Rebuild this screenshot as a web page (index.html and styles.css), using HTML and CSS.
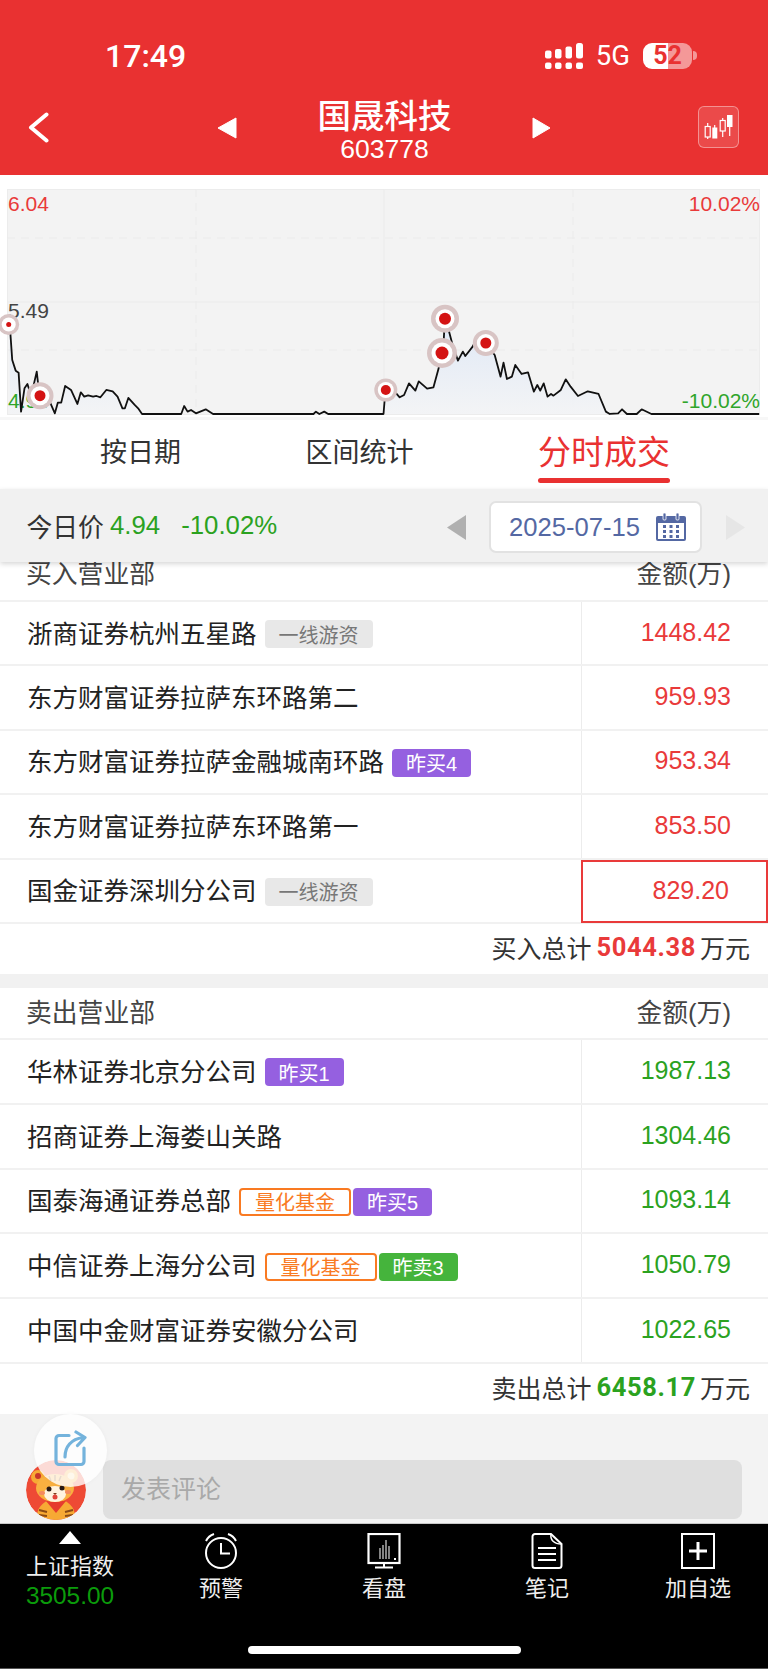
FILE: index.html
```html
<!DOCTYPE html>
<html lang="zh-CN">
<head>
<meta charset="utf-8">
<title>国晟科技 603778</title>
<link rel="stylesheet" href="styles.css">
</head>
<body>
<div class="page">
  <header class="top">
    <div class="status">
      <span class="time">17:49</span>
      <svg class="signal" viewBox="0 0 38 26" width="38" height="26">
        <g fill="#fff">
          <rect x="0" y="7.500" width="6.500" height="8" rx="2"/><rect x="10" y="6" width="6.500" height="9.500" rx="2"/><rect x="20.500" y="3.500" width="6.500" height="12" rx="2"/><rect x="31" y="0" width="7" height="15.500" rx="2.500"/>
          <rect x="0" y="19.500" width="6.500" height="6.500" rx="2"/><rect x="10" y="19.500" width="6.500" height="6.500" rx="2"/><rect x="20.500" y="19.500" width="6.500" height="6.500" rx="2"/><rect x="31" y="19.500" width="7" height="6.500" rx="2"/>
        </g>
      </svg>
      <span class="net">5G</span>
      <span class="battery">52</span>
    </div>
    <nav class="nav">
      <svg class="back" viewBox="0 0 21 31" width="21" height="31"><path d="M18.500 2.500 3 15.500l15.500 13" fill="none" stroke="#fff" stroke-width="4" stroke-linecap="round" stroke-linejoin="round"/></svg>
      <svg class="tri-l" viewBox="0 0 20 22" width="20" height="22"><path d="M19 1v20L1 11z" fill="#fff" stroke="#fff" stroke-linejoin="round"/></svg>
      <div class="stock"><div class="stock-name">国晟科技</div><div class="stock-code">603778</div></div>
      <svg class="tri-r" viewBox="0 0 19 22" width="19" height="22"><path d="M1 1v20l17-10z" fill="#fff" stroke="#fff" stroke-linejoin="round"/></svg>
      <div class="kline">
        <svg viewBox="0 0 41 42" width="41" height="42">
          <g stroke="#fff" stroke-width="1.200" fill="none">
            <path d="M9.700 17v4M9.700 31v2M16.700 19v4M24.700 12v3M24.700 25v6M31.700 21v9"/>
            <rect x="7.200" y="20.500" width="5" height="10.500"/>
            <rect x="22.200" y="14.500" width="5" height="10.500"/>
          </g>
          <rect x="14.300" y="21.500" width="5" height="11" fill="#fff"/>
          <rect x="29" y="9" width="5.500" height="12" fill="#fff"/>
        </svg>
      </div>
    </nav>
  </header>

  <section class="chart">
    <svg viewBox="0 0 768 240" width="768" height="240">
      <defs>
        <linearGradient id="area" x1="0" y1="0" x2="0" y2="1"><stop offset="0" stop-color="#dde7f6"/><stop offset="1" stop-color="#f3f4f6"/></linearGradient>
      </defs>
      <rect x="7.500" y="9.500" width="752" height="225" fill="#f3f3f3" stroke="#ececec"/>
      <g stroke="#ebebeb" stroke-width="1">
        <path d="M196 9v225M573 9v225M7 58h753M7 170h753" stroke-dasharray="8 6"/>
        <path d="M384 9v225M7 122h753"/>
      </g>
      <text class="lbl red" x="8" y="31">6.04</text>
      <text class="lbl gray" x="8" y="138">5.49</text>
      <text class="lbl red" x="760" y="31" text-anchor="end">10.02%</text>
      <g transform="scale(.4898 .3333)">
        <path fill="url(#area)" d="M20 435 25 540 32 572 38 578 43 695 50 625 56 612 62 640 68 620 75 575 80 640 90 670 100 660 112 700 118 668 125 668 133 618 145 630 158 672 165 637 172 650 180 646 190 650 197 648 205 652 217 630 230 634 240 650 250 685 255 685 262 654 275 675 282 685 290 702H783L787 630 800 625 816 652 825 645 835 610 848 632 855 604 872 626 885 622 895 568 905 510 908 420 915 445 925 500 935 542 945 515 950 528 965 500 975 470 990 490 1010 525 1022 590 1028 548 1035 597 1045 590 1052 555 1065 582 1078 577 1090 635 1097 615 1103 632 1110 610 1118 650 1125 642 1130 647 1145 630 1155 598 1165 620 1180 648 1200 634 1222 642 1237 695 1245 702H20z" opacity=".9"/>
      </g>
      <text class="lbl green" x="8" y="228">4.94</text>
      <text class="lbl green" x="760" y="228" text-anchor="end">-10.02%</text>
      <g transform="scale(.4898 .3333)">
        <polyline fill="none" stroke="#111" stroke-width="1.800" vector-effect="non-scaling-stroke" stroke-linejoin="round" points="20,435 25,540 32,572 38,578 43,695 50,625 56,612 62,640 68,620 75,575 80,640 90,670 100,660 112,700 118,668 125,668 133,618 145,630 158,672 165,637 172,650 180,646 190,650 197,648 205,652 217,630 230,634 240,650 250,685 255,685 262,654 275,675 282,685 290,702 370,702 376,678 383,695 390,690 400,700 420,688 435,702 640,702 645,695 652,702 662,695 670,702 783,702 787,630 800,625 816,652 825,645 835,610 848,632 855,604 872,626 885,622 895,568 905,510 908,420 915,445 925,500 935,542 945,515 950,528 965,500 975,470 990,490 1010,525 1022,590 1028,548 1035,597 1045,590 1052,555 1065,582 1078,577 1090,635 1097,615 1103,632 1110,610 1118,650 1125,642 1130,647 1145,630 1155,598 1165,620 1180,648 1200,634 1222,642 1237,695 1245,702 1262,700 1270,688 1280,702 1300,702 1310,688 1330,702 1550,702"/>
      </g>
      <g class="dot"><circle cx="8.700" cy="144.500" r="10.500"/><circle class="w" cx="8.700" cy="144.500" r="7"/><circle class="r" cx="8.700" cy="144.500" r="2.500"/></g>
      <g class="dot"><circle cx="40" cy="215.700" r="13.500"/><circle class="w" cx="40" cy="215.700" r="9.500"/><circle class="r" cx="40" cy="215.700" r="5.500"/></g>
      <g class="dot"><circle cx="385.800" cy="210" r="11.500"/><circle class="w" cx="385.800" cy="210" r="8"/><circle class="r" cx="385.800" cy="210" r="5"/></g>
      <g class="dot"><circle cx="442" cy="173" r="15"/><circle class="w" cx="442" cy="173" r="10.500"/><circle class="r" cx="442" cy="173" r="6.500"/></g>
      <g class="dot"><circle cx="445" cy="138.700" r="14"/><circle class="w" cx="445" cy="138.700" r="9.500"/><circle class="r" cx="445" cy="138.700" r="6"/></g>
      <g class="dot"><circle cx="485.800" cy="163" r="13"/><circle class="w" cx="485.800" cy="163" r="9"/><circle class="r" cx="485.800" cy="163" r="5.500"/></g>
    </svg>
  </section>

  <div class="tabs">
    <span class="tab">按日期</span>
    <span class="tab">区间统计</span>
    <span class="tab active">分时成交</span>
  </div>

  <div class="pricebar">
    <span class="pb-label">今日价</span>
    <span class="pb-price">4.94</span>
    <span class="pb-pct">-10.02%</span>
    <svg class="pb-prev" viewBox="0 0 19 25" width="19" height="25"><path d="M19 0v25L0 12.500z" fill="#b0b0b0"/></svg>
    <div class="datebox">
      <span class="date">2025-07-15</span>
      <svg viewBox="0 0 30 28" width="30" height="28">
        <path d="M2 3h26a2 2 0 0 1 2 2v21a2 2 0 0 1-2 2H2a2 2 0 0 1-2-2V5a2 2 0 0 1 2-2z" fill="#5468a3"/>
        <rect x="2" y="10" width="26" height="16" fill="#fff"/>
        <rect x="7" y="0" width="3" height="7" rx="1" fill="#5468a3" stroke="#fff" stroke-width=".8"/>
        <rect x="20" y="0" width="3" height="7" rx="1" fill="#5468a3" stroke="#fff" stroke-width=".8"/>
        <g fill="#5468a3">
          <rect x="7" y="12" width="3" height="3"/><rect x="13.500" y="12" width="3" height="3"/><rect x="20" y="12" width="3" height="3"/>
          <rect x="7" y="17" width="3" height="3"/><rect x="13.500" y="17" width="3" height="3"/><rect x="20" y="17" width="3" height="3"/>
          <rect x="7" y="22" width="3" height="3"/><rect x="13.500" y="22" width="3" height="3"/><rect x="20" y="22" width="3" height="3"/>
        </g>
      </svg>
    </div>
    <svg class="pb-next" viewBox="0 0 19 25" width="19" height="25"><path d="M0 0v25l19-12.500z" fill="#e6e6e6"/></svg>
  </div>

  <section class="list buy">
    <div class="thead first"><span>买入营业部</span><span>金额(万)</span></div>
    <div class="row"><div class="name">浙商证券杭州五星路<span class="tag grey">一线游资</span></div><div class="amt">1448.42</div></div>
    <div class="row"><div class="name">东方财富证券拉萨东环路第二</div><div class="amt">959.93</div></div>
    <div class="row"><div class="name">东方财富证券拉萨金融城南环路<span class="tag purple">昨买4</span></div><div class="amt">953.34</div></div>
    <div class="row"><div class="name">东方财富证券拉萨东环路第一</div><div class="amt">853.50</div></div>
    <div class="row"><div class="name">国金证券深圳分公司<span class="tag grey">一线游资</span></div><div class="amt boxed">829.20</div></div>
    <div class="total">买入总计<b>5044.38</b>万元</div>
  </section>

  <section class="list sell">
    <div class="thead"><span>卖出营业部</span><span>金额(万)</span></div>
    <div class="row"><div class="name">华林证券北京分公司<span class="tag purple">昨买1</span></div><div class="amt">1987.13</div></div>
    <div class="row"><div class="name">招商证券上海娄山关路</div><div class="amt">1304.46</div></div>
    <div class="row"><div class="name">国泰海通证券总部<span class="tag orange">量化基金</span><span class="tag purple next">昨买5</span></div><div class="amt">1093.14</div></div>
    <div class="row"><div class="name">中信证券上海分公司<span class="tag orange">量化基金</span><span class="tag green next">昨卖3</span></div><div class="amt">1050.79</div></div>
    <div class="row"><div class="name">中国中金财富证券安徽分公司</div><div class="amt">1022.65</div></div>
    <div class="total">卖出总计<b>6458.17</b>万元</div>
  </section>

  <section class="comment">
    <svg class="avatar" viewBox="0 0 60 60" width="60" height="60">
      <defs><clipPath id="av"><circle cx="30" cy="30" r="30"/></clipPath></defs>
      <g clip-path="url(#av)">
        <rect width="60" height="60" fill="#ee4a35"/>
        <ellipse cx="30" cy="56" rx="19" ry="17" fill="#f7a934"/>
        <path d="M13 50l8 2M13 55l8 1M47 50l-8 2M47 55l-8 1" stroke="#8a4a15" stroke-width="2"/>
        <path d="M20 41h20l-10 12z" fill="#e63b2e"/>
        <circle cx="12" cy="17" r="7" fill="#f7a934"/><circle cx="12" cy="16" r="3" fill="#c8352a"/>
        <circle cx="45" cy="16" r="7" fill="#f7a934"/><circle cx="45" cy="16" r="3.500" fill="#fbd9a0"/>
        <ellipse cx="29" cy="28" rx="19" ry="14" fill="#f9b040"/>
        <ellipse cx="29" cy="34" rx="11" ry="8" fill="#fff3df"/>
        <path d="M29 15v6M23 16l2 5M35 16l-2 5" stroke="#8a4a15" stroke-width="1.500"/>
        <circle cx="23" cy="29" r="2.500" fill="#2a1a12"/><circle cx="36" cy="28" r="2.500" fill="#2a1a12"/>
        <ellipse cx="16" cy="33" rx="3" ry="2" fill="#f58a5e"/><ellipse cx="42" cy="32" rx="3" ry="2" fill="#f58a5e"/>
        <path d="M27 33h4l-2 2z" fill="#7a3a1a"/>
        <ellipse cx="29" cy="37" rx="2.500" ry="2.500" fill="#e2453a"/>
      </g>
    </svg>
    <div class="input">发表评论</div>
    <button class="share" type="button" aria-label="分享">
      <svg viewBox="-2 -4 38 40" width="38" height="40">
        <path d="M15 1.500H5a3 3 0 0 0-3 3v23a3 3 0 0 0 3 3h22a3 3 0 0 0 3-3V14" fill="none" stroke="#74b3dc" stroke-width="3.200" stroke-linecap="round"/>
        <path d="M11 23C11 13 17 5 29 3.500M22-2l9 5.500-7.500 8" fill="none" stroke="#74b3dc" stroke-width="3.200" stroke-linecap="round" stroke-linejoin="round"/>
      </svg>
    </button>
  </section>

  <footer class="bottom">
    <div class="bar">
      <div class="item index">
        <svg viewBox="0 0 22 13" width="22" height="13"><path d="M11 0l11 13H0z" fill="#fff"/></svg>
        <span class="idx-name">上证指数</span>
        <span class="idx-val">3505.00</span>
      </div>
      <div class="item">
        <svg viewBox="0 0 34 36" width="34" height="36" fill="none" stroke="#fff">
          <circle cx="17" cy="20" r="15" stroke-width="2"/>
          <path d="M17 10v10.500h9" stroke-width="2"/>
          <path d="M2 8C4 4 7 2 10 1M32 8c-2-4-5-6-8-7" stroke-width="2"/>
        </svg>
        <span class="lab">预警</span>
      </div>
      <div class="item">
        <svg viewBox="0 0 34 36" width="34" height="36" fill="none" stroke="#fff">
          <rect x="1.500" y="1" width="31" height="29" stroke-width="2.200"/>
          <path d="M13 15v11M16 12v14M19 7v19M22 13v13" stroke-width="1.200" opacity=".85"/>
          <path d="M28 25v2" stroke-width="2"/>
          <path d="M17 30v4M8 34.500h18" stroke-width="2"/>
        </svg>
        <span class="lab">看盘</span>
      </div>
      <div class="item">
        <svg viewBox="0 0 34 36" width="34" height="36" fill="none" stroke="#fff">
          <path d="M21 1H5a2.500 2.500 0 0 0-2.500 2.500v29A2.500 2.500 0 0 0 5 35h24a2.500 2.500 0 0 0 2.500-2.500V11z" stroke-width="2"/>
          <path d="M21 1c-1 6 3 10 10.500 10" stroke-width="1.500"/>
          <path d="M8 15h18M8 21h18M8 27h18" stroke-width="2"/>
        </svg>
        <span class="lab">笔记</span>
      </div>
      <div class="item">
        <svg viewBox="0 0 34 36" width="34" height="36" fill="none" stroke="#fff">
          <rect x="1" y="1" width="32" height="34" stroke-width="2"/>
          <path d="M8 18h18M17 9v18" stroke-width="3"/>
        </svg>
        <span class="lab">加自选</span>
      </div>
    </div>
    <div class="home"></div>
  </footer>
</div>
</body>
</html>
```
FILE: styles.css
```css
* { box-sizing: border-box; }
html, body { margin: 0; padding: 0; background: #fff; }
body { font-family: "Liberation Sans", "Noto Sans CJK SC", sans-serif; color: #222; }
svg { display: block; flex: none; }
.page { width: 768px; height: 1669px; overflow: hidden; position: relative; }

/* header */
.top { height: 175px; background: #e93131; padding-top: 43px; color: #fff; }
.status { display: flex; align-items: center; height: 26px; padding: 0 76px 0 105px; }
.time { font-family: Roboto, "Liberation Sans", sans-serif; font-weight: 500; font-size: 32px; line-height: 26px; margin-right: auto; }
.net { font-family: Roboto, "Liberation Sans", sans-serif; font-size: 27.500px; line-height: 26px; margin: 0 13px; }
.battery { position: relative; width: 49px; height: 26px; border-radius: 9px; background: linear-gradient(90deg, #fff 52%, rgba(255,255,255,.5) 52%); color: #e93131; font-family: Roboto, "Liberation Sans", sans-serif; font-weight: 700; font-size: 25px; line-height: 26px; text-align: center; }
.battery::after { content: ""; position: absolute; left: 50px; top: 8px; width: 4px; height: 9px; border-radius: 0 4px 4px 0; background: rgba(255,255,255,.5); }
.nav { display: flex; align-items: center; height: 64px; margin-top: 29px; padding: 0 29px 0 28px; }
.back { margin-right: 168px; margin-top: -6px; }
.tri-l, .tri-r { margin-top: -4px; }
.stock { width: 295px; text-align: center; }
.stock-name { font-size: 33.500px; line-height: 38px; font-weight: 500; }
.stock-code { font-size: 26.500px; line-height: 26px; }
.kline { margin-left: auto; width: 41px; height: 42px; margin-top: -6px; border: 1px solid rgba(255,255,255,.4); border-radius: 6px; background: rgba(255,255,255,.12); }
.kline svg { margin: -1px; }

/* chart */
.chart { height: 242px; padding-top: 5px; }
.lbl { font-size: 21px; }
.red { fill: #e93a3a; }
.gray { fill: #444; }
.green { fill: #2fa52a; }
.dot circle { fill: #d8c4c4; }
.dot .w { fill: #fff; }
.dot .r { fill: #d41313; }

/* tabs */
.tabs { display: flex; align-items: flex-start; gap: 124.500px; height: 72px; padding-left: 100px; border-top: 3px solid #f7f7f7; }
.tab { position: relative; font-size: 27px; line-height: 38px; margin-top: 14px; color: #333; }
.tab.active { font-size: 33px; line-height: 42px; margin-top: 12px; color: #e93131; }
.tab.active::after { content: ""; position: absolute; left: 0; right: 0; top: 46px; height: 5px; border-radius: 3px; background: #e93131; }

/* price bar */
.pricebar { position: relative; z-index: 2; display: flex; align-items: center; height: 73px; padding-left: 26.500px; background: #f1f1f1; box-shadow: 0 2px 5px rgba(0,0,0,.16); font-size: 25.800px; }
.pb-label { color: #333; }
.pb-price { color: #2ba21f; margin-left: 6px; }
.pb-pct { color: #2ba21f; margin-left: 21px; }
.pb-prev { margin-left: auto; margin-top: 3px; }
.datebox { display: flex; align-items: center; width: 213px; height: 52px; margin: 3px 24px 0 23px; padding-left: 18px; background: #fff; border: 2px solid #e2e2e2; border-radius: 7px; }
.date { color: #5468a3; font-size: 25.600px; margin-right: 16px; }
.pb-next { margin: 3px 23px 0 0; }

/* lists */
.thead { display: flex; justify-content: space-between; align-items: center; height: 52px; padding: 0 37px 4px 26px; border-bottom: 2px solid #f1f1f1; font-size: 25.800px; color: #444; }
.thead.first { height: 40px; padding-bottom: 20px; }
.row { display: flex; height: 64.400px; border-bottom: 2px solid #f1f1f1; }
.sell .row { height: 64.800px; }
.name { flex: 1; display: flex; align-items: center; padding: 0 0 4px 27px; font-size: 25.500px; color: #222; }
.amt { width: 187px; display: flex; align-items: center; justify-content: flex-end; padding: 0 37px 2px 0; border-left: 1px solid #ececec; font-size: 25px; }
.buy .amt { color: #e93a3a; }
.sell .amt { color: #2ba21f; }
.amt.boxed { border: 2px solid #e93a3a; margin-bottom: -1px; }
.tag { display: inline-flex; align-items: center; justify-content: center; height: 28px; margin: 6px 0 0 8px; padding: 0 14px; border-radius: 4px; font-size: 20px; }
.grey { background: #e8e8e8; color: #777; }
.purple { background: #9560e0; color: #fff; }
.tag.green { background: #45b43c; color: #fff; }
.orange { border: 2px solid #f97a22; color: #f97a22; background: #fff; }
.tag.next { margin-left: 2px; }
.total { display: flex; align-items: center; justify-content: flex-end; height: 50px; padding: 0 18px 3px 0; font-size: 25px; color: #333; }
.total b { font-family: Roboto, "Liberation Sans", sans-serif; font-weight: 700; font-size: 25.500px; letter-spacing: .6px; margin: 0 4px 0 5px; }
.buy .total b { color: #e93a3a; }
.sell .total b { color: #2ba21f; }
.sell { border-top: 14px solid #f1f1f1; }

/* comment */
.comment { position: relative; display: flex; align-items: flex-start; gap: 17px; height: 109px; padding: 46px 26px 0; background: #f3f3f3; }
.avatar { border-radius: 50%; }
.input { flex: 1; height: 59px; padding-left: 18px; border-radius: 8px; background: #dfdfdf; font-size: 25px; line-height: 59px; color: #a9a9a9; }
.share { position: absolute; left: 34px; top: 0; display: flex; align-items: center; justify-content: center; width: 73px; height: 73px; padding: 0; border: 0; border-radius: 50%; background: rgba(255,255,255,.8); box-shadow: 0 0 4px rgba(0,0,0,.04); }

/* bottom */
.bottom { height: 146px; background: #000; border-top: 1px solid #c8c8c8; border-bottom: 1px solid #555; }
.bar { display: grid; grid-template-columns: 140px 162px 164px 162px 140px; height: 122px; color: #fff; }
.item { display: flex; flex-direction: column; align-items: center; padding-top: 9px; }
.lab { font-size: 22px; line-height: 30px; margin-top: 5px; color: #eee; }
.item.index { padding-top: 7px; }
.idx-name { font-size: 22px; line-height: 30px; margin-top: 8px; color: #eee; }
.idx-val { font-size: 24.400px; line-height: 28px; color: #0b9b0b; }
.home { width: 273px; height: 8px; margin: 0 auto; border-radius: 4px; background: #fff; }
```
